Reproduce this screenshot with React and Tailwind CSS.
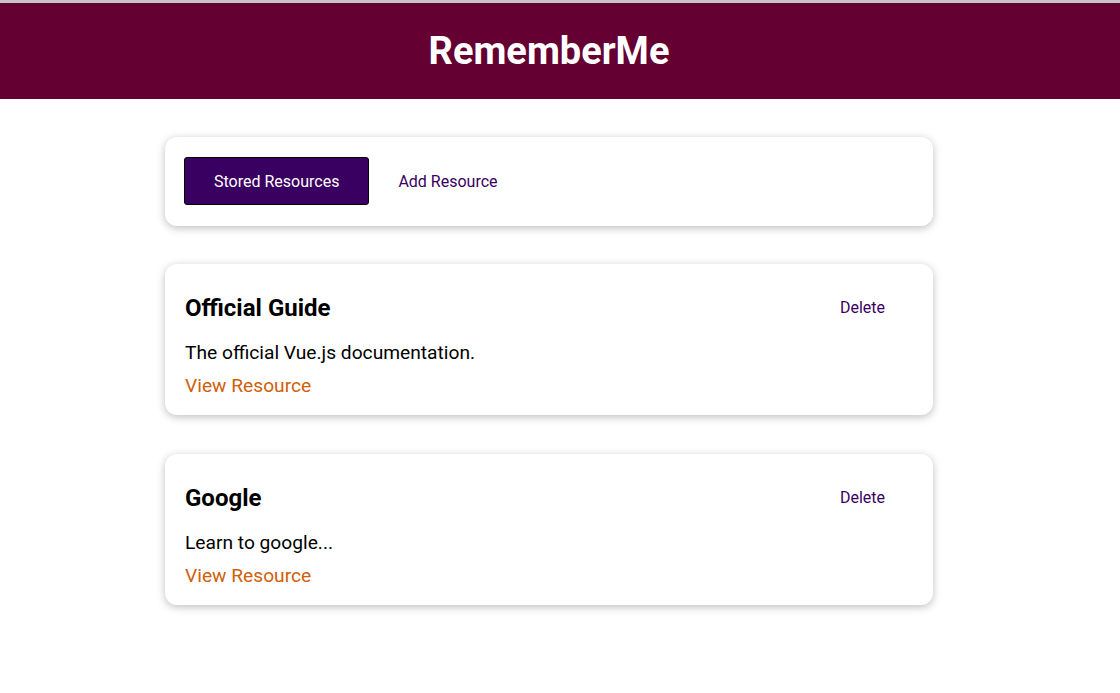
const resources = [
  {
    id: "official-guide",
    title: "Official Guide",
    description: "The official Vue.js documentation.",
    link: "https://vuejs.org",
  },
  {
    id: "google",
    title: "Google",
    description: "Learn to google...",
    link: "https://google.org",
  },
];

function BaseCard({ children, className = "" }) {
  return (
    <div
      className={
        "mx-auto w-[768px] rounded-xl bg-white px-5 pt-5 shadow-[0_2px_8px_rgba(0,0,0,0.26)] " +
        className
      }
    >
      {children}
    </div>
  );
}

function ResourceItem({ resource, first }) {
  return (
    <li className={first ? "mt-[38px]" : "mt-[39px]"}>
      <BaseCard className="pb-[17px]">
        <header className="flex items-center justify-between">
          <h3 className="text-[24px] font-bold leading-[28px] text-black">{resource.title}</h3>
          <button className="h-12 border border-transparent px-[27px] text-[16px] text-[#3a0061]">
            Delete
          </button>
        </header>
        <p className="mt-[9px] text-[19.2px] leading-6 text-black">{resource.description}</p>
        <nav className="mt-[9px] text-[19.2px] leading-6">
          <a href={resource.link} className="text-[#d0600a] no-underline">
            View Resource
          </a>
        </nav>
      </BaseCard>
    </li>
  );
}

export default function App() {
  return (
    <div className="min-h-screen bg-white font-['Roboto',sans-serif]">
      <div className="h-[3px] bg-[#c8c4c4]" />
      <header className="flex h-24 w-full items-center justify-center bg-[#640032] pr-[22px]">
        <h1 className="m-0 text-[38px] font-bold text-white">RememberMe</h1>
      </header>

      <div className="pr-[22px]">
        <BaseCard className="mt-[38px] pb-[21px]">
          <div className="-ml-px flex">
            <button className="h-12 rounded-[3px] border border-black bg-[#3a0061] px-[29px] pt-px text-[16px] text-white">
              Stored Resources
            </button>
            <button className="h-12 border border-transparent px-[28px] pt-px text-[16px] text-[#3a0061]">
              Add Resource
            </button>
          </div>
        </BaseCard>

        <ul className="m-0 list-none p-0">
          {resources.map((r, i) => (
            <ResourceItem key={r.id} resource={r} first={i === 0} />
          ))}
        </ul>
      </div>
    </div>
  );
}
